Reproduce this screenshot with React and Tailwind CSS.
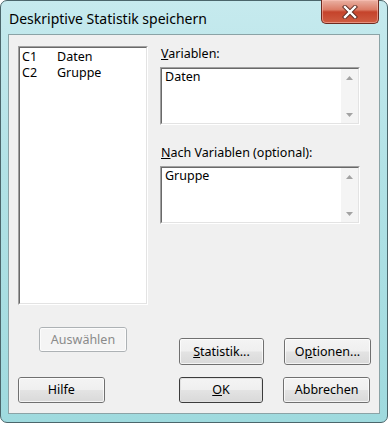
import React from "react";

function Btn({ children, className = "", disabled = false, isDefault = false }) {
  let look =
    "border-[#707070] bg-[linear-gradient(#f4f4f4,#efefef_48%,#e3e3e3_52%,#d9d9d9)] text-black";
  if (disabled) look = "border-[#adb2b5] bg-[#f4f4f4] text-[#8a8a8a]";
  if (isDefault)
    look =
      "border-[#3c3c3c] bg-[linear-gradient(#f4f4f4,#efefef_48%,#e3e3e3_52%,#d9d9d9)] text-black shadow-[inset_0_0_0_1px_#9a9a9a]";
  return (
    <div
      className={
        "flex items-center justify-center rounded-[3px] border text-[12.5px] leading-[16px] " +
        look +
        " " +
        className
      }
    >
      <div className="flex h-full w-full items-center justify-center rounded-[2px] shadow-[inset_0_0_0_1px_rgba(255,255,255,0.7)]">
        {children}
      </div>
    </div>
  );
}

function Sunken({ className = "", children }) {
  return (
    <div
      className={
        "border border-t-[#a0a0a0] border-l-[#a0a0a0] border-b-white border-r-white " + className
      }
    >
      <div className="h-full border border-t-[#696969] border-l-[#696969] border-b-[#e3e3e3] border-r-[#e3e3e3] bg-white">
        {children}
      </div>
    </div>
  );
}

function Arrow({ down = false }) {
  return (
    <div className="flex h-[17px] items-center justify-center">
      <svg width="7" height="4" viewBox="0 0 7 4">
        {down ? (
          <polygon points="0,0 7,0 3.5,4" fill="#a3a3a3" />
        ) : (
          <polygon points="0,4 7,4 3.5,0" fill="#a3a3a3" />
        )}
      </svg>
    </div>
  );
}

function TextBox({ value }) {
  return (
    <Sunken className="mt-[5px] h-[58px] w-[200px]">
      <div className="flex h-full">
        <div className="flex-1 pl-[3px] text-[12.5px] leading-[16px]">{value}</div>
        <div className="flex w-[17px] flex-col justify-between bg-[#f4f4f4]">
          <Arrow />
          <Arrow down />
        </div>
      </div>
    </Sunken>
  );
}

export default function App() {
  return (
    <div className="flex h-[423px] w-[388px] flex-col rounded-[7px] border border-[#4b666b] bg-[linear-gradient(180deg,#c6eaee,#b2e2e6_40%,#9fdade)] font-['Noto_Sans',sans-serif] text-black">
      {/* Title bar */}
      <div className="flex h-[33px] justify-between pl-[8px] pr-[8px]">
        <div className="pt-[8px] text-[14px] leading-[20px]">Deskriptive Statistik speichern</div>
        <div className="-mt-px flex h-[24px] w-[58px] items-center justify-center rounded-b-[5px] border border-t-0 border-[#6e2a1f] bg-[linear-gradient(#eab2a4,#db7c66_42%,#c5432b_52%,#cf5d42)] shadow-[inset_0_0_0_1px_rgba(255,200,190,0.5)]">
          <svg width="16" height="14" viewBox="0 0 16 14">
            <path d="M3 2 L13 12 M13 2 L3 12" stroke="#5a2a22" strokeWidth="4.2" strokeLinecap="square" />
            <path d="M3 2 L13 12 M13 2 L3 12" stroke="#ffffff" strokeWidth="2.4" strokeLinecap="square" />
          </svg>
        </div>
      </div>

      {/* Client area */}
      <div className="mx-[7px] mb-[8px] flex flex-1 flex-col border border-[#8ba3a6] bg-[#f0f0f0] px-[9px] pt-[11px]">
        <div className="flex h-[319px]">
          {/* Left column */}
          <div className="flex w-[130px] flex-col">
            <Sunken className="h-[259px] w-[130px]">
              <div className="pl-[2px] pt-[1px] text-[12.5px] leading-[16px]">
                <div className="flex">
                  <span className="w-[35px]">C1</span>
                  <span>Daten</span>
                </div>
                <div className="flex">
                  <span className="w-[35px]">C2</span>
                  <span>Gruppe</span>
                </div>
              </div>
            </Sunken>
            <Btn disabled className="ml-[21px] mt-[22px] h-[25px] w-[88px]">
              Auswählen
            </Btn>
          </div>

          {/* Right column */}
          <div className="ml-[12px] flex flex-1 flex-col">
            <div className="pl-px text-[12.5px] leading-[16px]">
              <u>V</u>ariablen:
            </div>
            <TextBox value="Daten" />
            <div className="mt-[20px] pl-px text-[12.5px] leading-[16px]">
              <u>N</u>ach Variablen (optional):
            </div>
            <TextBox value="Gruppe" />
            <div className="mt-auto flex">
              <Btn className="ml-[19px] h-[27px] w-[85px]">
                <span>
                  <u>S</u>tatistik...
                </span>
              </Btn>
              <Btn className="ml-[20px] h-[27px] w-[87px]">
                <span>
                  O<u>p</u>tionen...
                </span>
              </Btn>
            </div>
          </div>
        </div>

        {/* Bottom buttons */}
        <div className="mt-[12px] flex">
          <Btn className="h-[26px] w-[87px]">Hilfe</Btn>
          <Btn isDefault className="ml-[74px] h-[26px] w-[85px]">
            <span>
              <u>O</u>K
            </span>
          </Btn>
          <Btn className="ml-[20px] h-[26px] w-[87px]">Abbrechen</Btn>
        </div>
      </div>
    </div>
  );
}
